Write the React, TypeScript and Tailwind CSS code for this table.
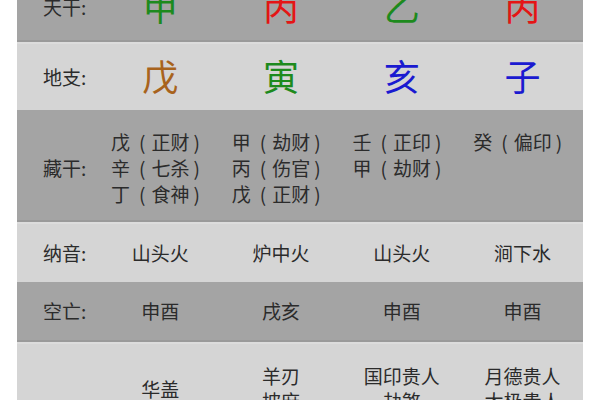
const font = { fontFamily: '"Noto Sans CJK SC", "Noto Sans", sans-serif' }

type Big = { c: string; color: string }

const tiangan: Big[] = [
  { c: '甲', color: 'text-[#1d8a1d]' },
  { c: '丙', color: 'text-[#e41515]' },
  { c: '乙', color: 'text-[#1d8a1d]' },
  { c: '丙', color: 'text-[#e41515]' },
]

const dizhi: Big[] = [
  { c: '戊', color: 'text-[#a8631c]' },
  { c: '寅', color: 'text-[#1d8a1d]' },
  { c: '亥', color: 'text-[#1a1ad0]' },
  { c: '子', color: 'text-[#1a1ad0]' },
]

// [干, 十神]
const canggan: [string, string][][] = [
  [['戊', '正财'], ['辛', '七杀'], ['丁', '食神']],
  [['甲', '劫财'], ['丙', '伤官'], ['戊', '正财']],
  [['壬', '正印'], ['甲', '劫财']],
  [['癸', '偏印']],
]

const nayin = ['山头火', '炉中火', '山头火', '涧下水']
const kongwang = ['申酉', '戌亥', '申酉', '申酉']

const shensha = [
  ['华盖', '桃花', '驿马'],
  ['羊刃', '披麻', '红艳', '将星'],
  ['国印贵人', '劫煞', '天喜', '亡神'],
  ['月德贵人', '太极贵人', '灾煞', '福星贵人'],
]

function Label({ text, className = '' }: { text: string; className?: string }) {
  return <div className={`w-[83px] shrink-0 pl-[26px] text-[19px] text-[#2b2b2b] ${className}`}>{text}</div>
}

function BigRow({ label, items, dark }: { label: string; items: Big[]; dark?: boolean }) {
  return (
    <div
      className={`flex h-[68px] items-center ${
        dark ? 'bg-[#a4a4a4] border-b-2 border-[#9a9a9a]' : 'bg-[#d5d5d5] border-t-2 border-[#dcdcdc]'
      }`}
    >
      <Label text={label} />
      {items.map((it, i) => (
        <div key={i} className={`-mt-[4px] flex-1 text-center text-[36px] leading-none ${it.color}`}>
          {it.c}
        </div>
      ))}
    </div>
  )
}

function TextRow({ label, items, dark }: { label: string; items: string[]; dark?: boolean }) {
  return (
    <div
      className={`flex h-[60px] items-center ${
        dark ? 'bg-[#a4a4a4] border-b-2 border-[#9a9a9a]' : 'bg-[#d5d5d5] border-t-2 border-[#dcdcdc]'
      }`}
    >
      <Label text={label} />
      {items.map((t, i) => (
        <div key={i} className="flex-1 text-center text-[19px] text-[#2b2b2b]">
          {t}
        </div>
      ))}
    </div>
  )
}

export default function App() {
  return (
    <div className="h-[400px] w-[600px] overflow-hidden bg-white" style={font}>
      <div className="mx-[17px] -mt-[26px]">
        <BigRow label="天干:" items={tiangan} dark />
        <BigRow label="地支:" items={dizhi} />

        {/* 藏干 */}
        <div className="flex h-[112px] items-center bg-[#a4a4a4] border-b-2 border-[#9a9a9a]">
          <Label text="藏干:" className="mt-[6px]" />
          {canggan.map((lines, i) => (
            <div key={i} className="flex h-full flex-1 justify-center pt-[19px] pr-[10px]">
              <div className="text-[19px] leading-[26px] text-[#2b2b2b]">
                {lines.map(([g, s], j) => (
                  <div key={j} className="whitespace-nowrap">
                    {g}
                    <span className="ml-[9px] mr-[6px]">(</span>
                    {s}
                    <span className="ml-[4px]">)</span>
                  </div>
                ))}
              </div>
            </div>
          ))}
        </div>

        <TextRow label="纳音:" items={nayin} />
        <TextRow label="空亡:" items={kongwang} dark />

        {/* 神煞 */}
        <div className="flex h-[140px] items-center bg-[#d5d5d5] border-t-2 border-[#dcdcdc]">
          <Label text="神煞:" />
          {shensha.map((lines, i) => (
            <div key={i} className="flex-1 text-center text-[19px] leading-[25px] text-[#2b2b2b]">
              {lines.map((l, j) => (
                <div key={j}>{l}</div>
              ))}
            </div>
          ))}
        </div>
      </div>
    </div>
  )
}
